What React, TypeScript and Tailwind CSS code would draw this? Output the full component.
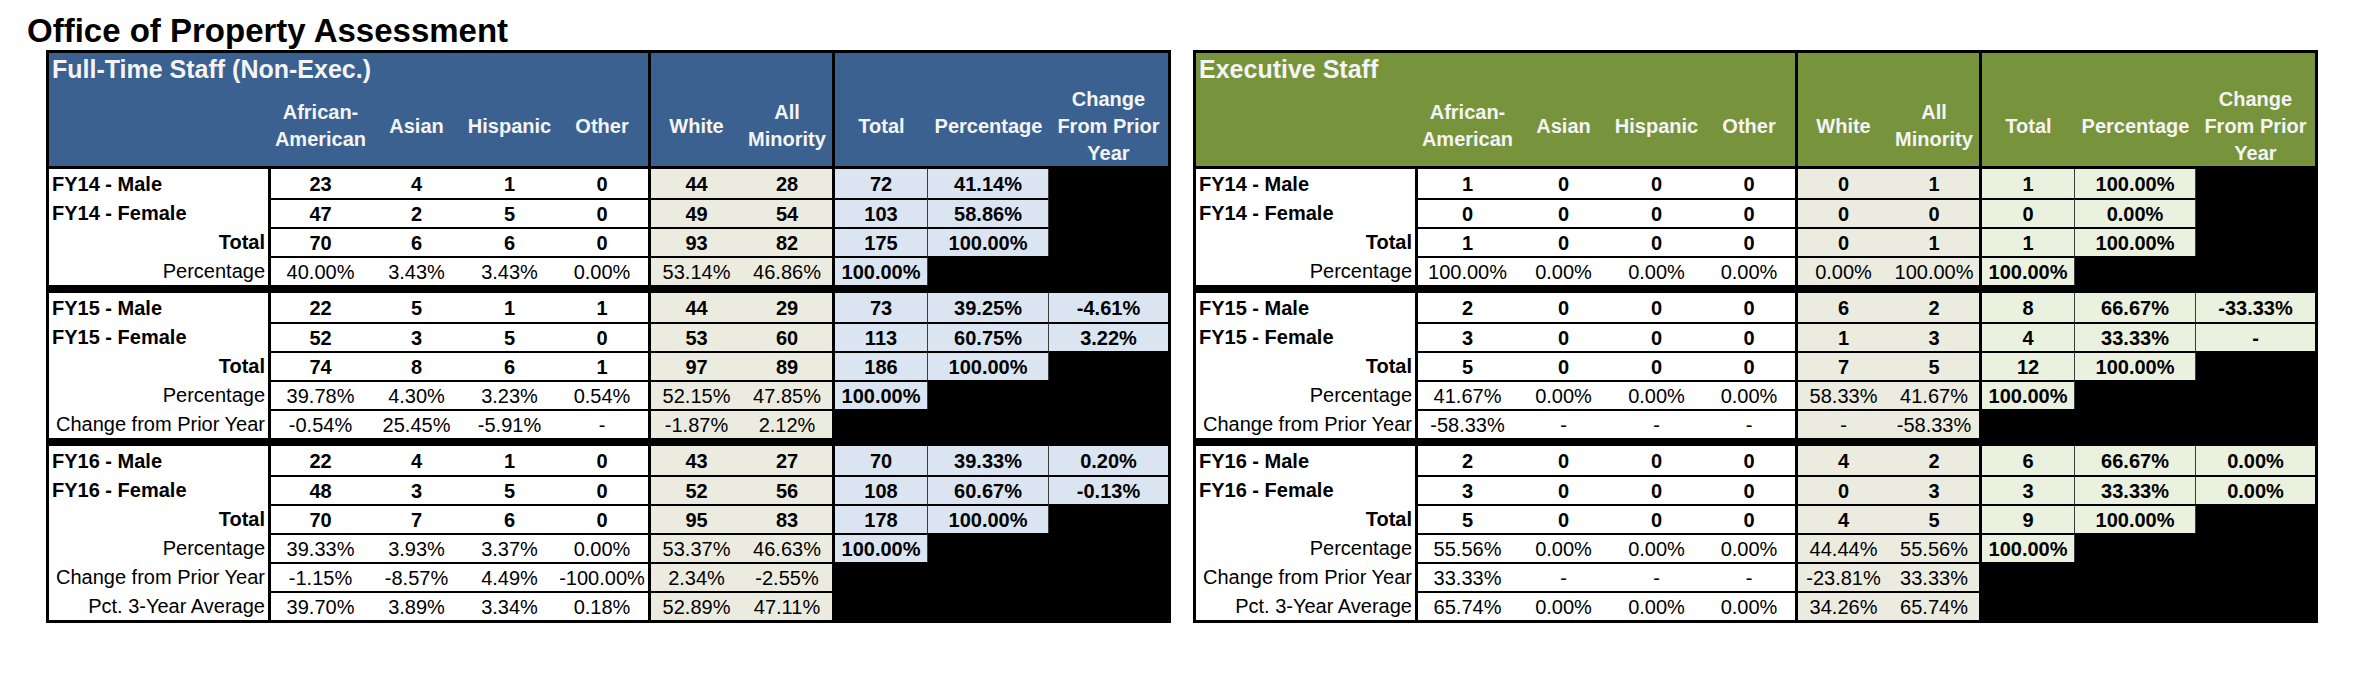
import React from "react";

type Row = { label: string; kind: "n" | "t" | "p" | "c"; vals: (string | null)[] };
type Block = Row[];

const W = ["w-[222px]", "w-[99px]", "w-[93px]", "w-[93px]", "w-[95px]", "w-[91px]", "w-[93px]", "w-[93px]", "w-[121px]", "w-[119px]"];

const left: Block[] = [
  [
    { label: "FY14 - Male", kind: "n", vals: ["23", "4", "1", "0", "44", "28", "72", "41.14%", null] },
    { label: "FY14 - Female", kind: "n", vals: ["47", "2", "5", "0", "49", "54", "103", "58.86%", null] },
    { label: "Total", kind: "t", vals: ["70", "6", "6", "0", "93", "82", "175", "100.00%", null] },
    { label: "Percentage", kind: "p", vals: ["40.00%", "3.43%", "3.43%", "0.00%", "53.14%", "46.86%", "100.00%", null, null] },
  ],
  [
    { label: "FY15 - Male", kind: "n", vals: ["22", "5", "1", "1", "44", "29", "73", "39.25%", "-4.61%"] },
    { label: "FY15 - Female", kind: "n", vals: ["52", "3", "5", "0", "53", "60", "113", "60.75%", "3.22%"] },
    { label: "Total", kind: "t", vals: ["74", "8", "6", "1", "97", "89", "186", "100.00%", null] },
    { label: "Percentage", kind: "p", vals: ["39.78%", "4.30%", "3.23%", "0.54%", "52.15%", "47.85%", "100.00%", null, null] },
    { label: "Change from Prior Year", kind: "c", vals: ["-0.54%", "25.45%", "-5.91%", "-", "-1.87%", "2.12%", null, null, null] },
  ],
  [
    { label: "FY16 - Male", kind: "n", vals: ["22", "4", "1", "0", "43", "27", "70", "39.33%", "0.20%"] },
    { label: "FY16 - Female", kind: "n", vals: ["48", "3", "5", "0", "52", "56", "108", "60.67%", "-0.13%"] },
    { label: "Total", kind: "t", vals: ["70", "7", "6", "0", "95", "83", "178", "100.00%", null] },
    { label: "Percentage", kind: "p", vals: ["39.33%", "3.93%", "3.37%", "0.00%", "53.37%", "46.63%", "100.00%", null, null] },
    { label: "Change from Prior Year", kind: "c", vals: ["-1.15%", "-8.57%", "4.49%", "-100.00%", "2.34%", "-2.55%", null, null, null] },
    { label: "Pct. 3-Year Average", kind: "c", vals: ["39.70%", "3.89%", "3.34%", "0.18%", "52.89%", "47.11%", null, null, null] },
  ],
];

const right: Block[] = [
  [
    { label: "FY14 - Male", kind: "n", vals: ["1", "0", "0", "0", "0", "1", "1", "100.00%", null] },
    { label: "FY14 - Female", kind: "n", vals: ["0", "0", "0", "0", "0", "0", "0", "0.00%", null] },
    { label: "Total", kind: "t", vals: ["1", "0", "0", "0", "0", "1", "1", "100.00%", null] },
    { label: "Percentage", kind: "p", vals: ["100.00%", "0.00%", "0.00%", "0.00%", "0.00%", "100.00%", "100.00%", null, null] },
  ],
  [
    { label: "FY15 - Male", kind: "n", vals: ["2", "0", "0", "0", "6", "2", "8", "66.67%", "-33.33%"] },
    { label: "FY15 - Female", kind: "n", vals: ["3", "0", "0", "0", "1", "3", "4", "33.33%", "-"] },
    { label: "Total", kind: "t", vals: ["5", "0", "0", "0", "7", "5", "12", "100.00%", null] },
    { label: "Percentage", kind: "p", vals: ["41.67%", "0.00%", "0.00%", "0.00%", "58.33%", "41.67%", "100.00%", null, null] },
    { label: "Change from Prior Year", kind: "c", vals: ["-58.33%", "-", "-", "-", "-", "-58.33%", null, null, null] },
  ],
  [
    { label: "FY16 - Male", kind: "n", vals: ["2", "0", "0", "0", "4", "2", "6", "66.67%", "0.00%"] },
    { label: "FY16 - Female", kind: "n", vals: ["3", "0", "0", "0", "0", "3", "3", "33.33%", "0.00%"] },
    { label: "Total", kind: "t", vals: ["5", "0", "0", "0", "4", "5", "9", "100.00%", null] },
    { label: "Percentage", kind: "p", vals: ["55.56%", "0.00%", "0.00%", "0.00%", "44.44%", "55.56%", "100.00%", null, null] },
    { label: "Change from Prior Year", kind: "c", vals: ["33.33%", "-", "-", "-", "-23.81%", "33.33%", null, null, null] },
    { label: "Pct. 3-Year Average", kind: "c", vals: ["65.74%", "0.00%", "0.00%", "0.00%", "34.26%", "65.74%", null, null, null] },
  ],
];

function DataRow({ row, first, accent }: { row: Row; first: boolean; accent: string }) {
  const labelCls =
    row.kind === "n" ? "justify-start pl-[3px] font-bold" : row.kind === "t" ? "justify-end pr-[3px] font-bold" : "justify-end pr-[3px]";
  return (
    <div className="flex h-[29px]">
      <div className={`${W[0]} flex h-full items-center border-r-[3px] border-black bg-white text-black ${labelCls}`}>{row.label}</div>
      {row.vals.map((v, i) => {
        const col = i + 1;
        const bold = row.kind === "n" || row.kind === "t" || (row.kind === "p" && i === 6);
        const bg = v === null ? "bg-black" : i < 4 ? "bg-white" : i < 6 ? "bg-[#ecebe0]" : accent;
        const sep =
          col === 4 || col === 6
            ? "border-r-[3px] border-r-black"
            : col === 7 || col === 8
              ? v === null
                ? "border-r border-r-black"
                : "border-r border-r-[#3c3c3c]"
              : "";
        const top = first ? "" : "border-t-2 border-t-black";
        return (
          <div
            key={i}
            className={`${W[col]} flex h-full items-center justify-center whitespace-nowrap ${bg} ${sep} ${top} ${bold ? "font-bold" : ""}`}
          >
            {v}
          </div>
        );
      })}
    </div>
  );
}

function Head({ w, children }: { w: string; children: React.ReactNode }) {
  return <div className={`${w} flex items-center justify-center text-center leading-[27px]`}>{children}</div>;
}

function StaffTable({ title, head, accent, blocks }: { title: string; head: string; accent: string; blocks: Block[] }) {
  return (
    <div className="w-[1125px] shrink-0 border-[3px] border-black bg-black text-[20px] leading-none text-black">
      <div className={`flex border-b-[3px] border-black font-bold text-[#f4f4f4] ${head}`}>
        <div className="flex w-[602px] flex-col border-r-[3px] border-black">
          <div className="h-[33px] pl-[3px] text-[25px] leading-[33px]">{title}</div>
          <div className="flex h-[80px]">
            <div className="w-[222px]" />
            <Head w="w-[99px]">
              African-
              <br />
              American
            </Head>
            <Head w="w-[93px]">Asian</Head>
            <Head w="w-[93px]">Hispanic</Head>
            <Head w="w-[92px]">Other</Head>
          </div>
        </div>
        <div className="flex w-[184px] flex-col border-r-[3px] border-black pt-[33px]">
          <div className="flex h-[80px]">
            <Head w="w-[91px]">White</Head>
            <Head w="w-[90px]">
              All
              <br />
              Minority
            </Head>
          </div>
        </div>
        <div className="flex flex-1 flex-col pt-[33px]">
          <div className="flex h-[80px]">
            <Head w="w-[93px]">Total</Head>
            <Head w="w-[121px]">Percentage</Head>
            <Head w="w-[119px]">
              Change
              <br />
              From Prior
              <br />
              Year
            </Head>
          </div>
        </div>
      </div>
      {blocks.map((b, bi) => (
        <div key={bi} className={bi > 0 ? "mt-[8px]" : ""}>
          {b.map((r, ri) => (
            <DataRow key={ri} row={r} first={ri === 0} accent={accent} />
          ))}
        </div>
      ))}
    </div>
  );
}

export default function App() {
  return (
    <div className="h-[690px] w-[2360px] bg-white pt-[12px] font-['Liberation_Sans',Arial,Helvetica,sans-serif] text-black">
      <h1 className="pl-[27px] text-[33px] font-bold leading-[37px]">Office of Property Assessment</h1>
      <div className="ml-[46px] mt-[1px] flex gap-[22px]">
        <StaffTable title="Full-Time Staff (Non-Exec.)" head="bg-[#3a6190]" accent="bg-[#dbe5f1]" blocks={left} />
        <StaffTable title="Executive Staff" head="bg-[#77933c]" accent="bg-[#ebf1df]" blocks={right} />
      </div>
    </div>
  );
}
